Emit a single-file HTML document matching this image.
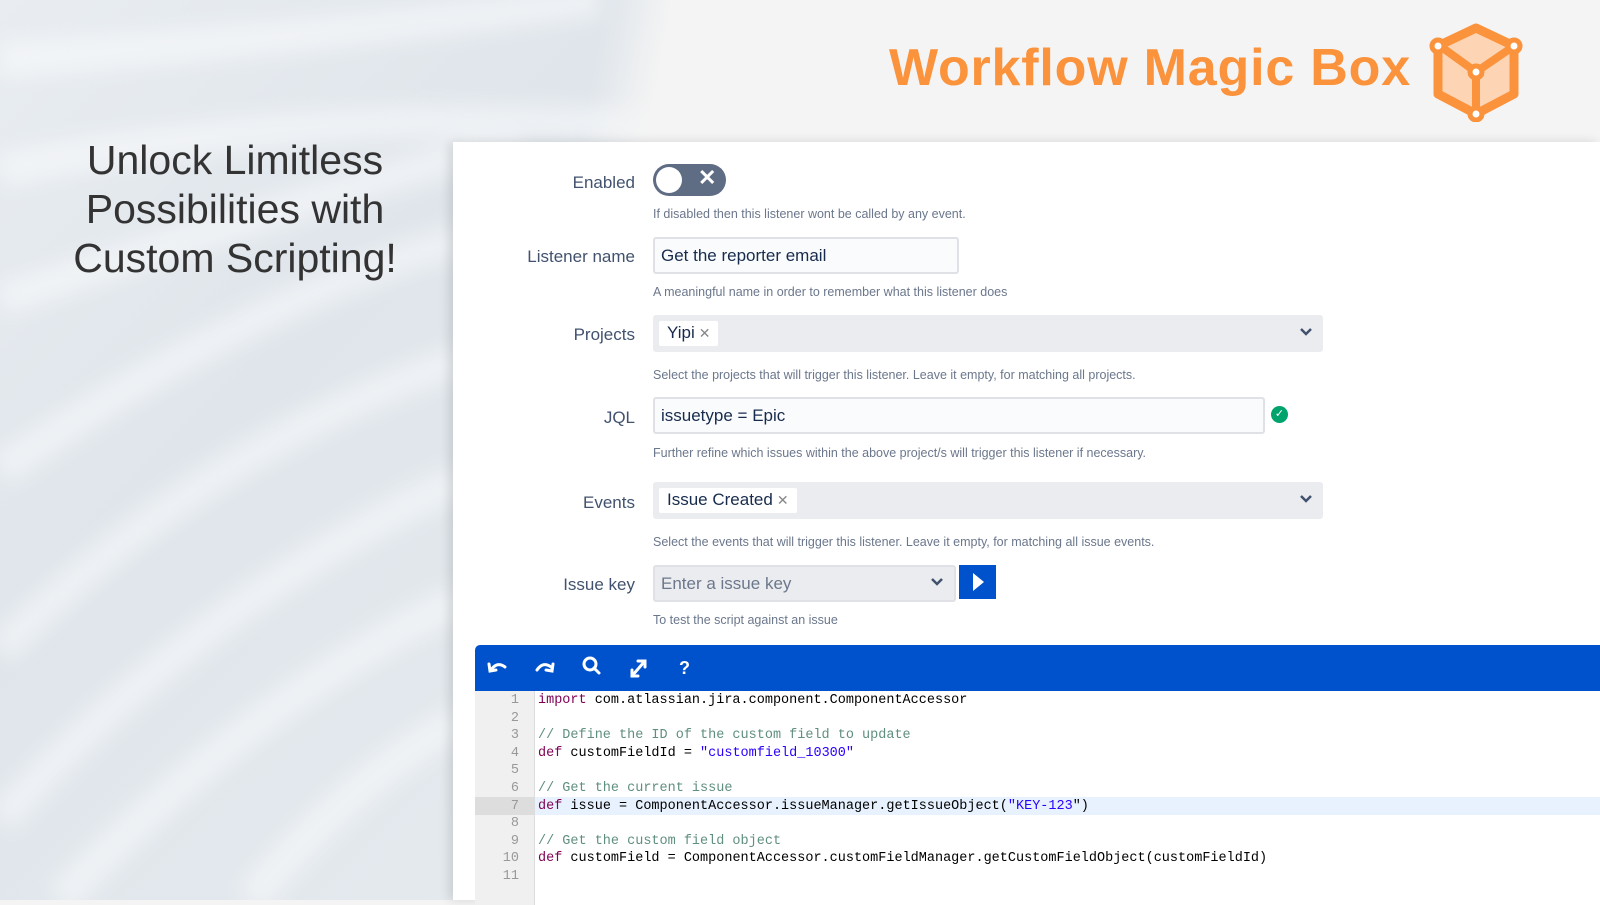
<!DOCTYPE html>
<html><head><style>
*{margin:0;padding:0;box-sizing:border-box}
body{width:1600px;height:900px;overflow:hidden;position:relative;font-family:"Liberation Sans",sans-serif;background:#f4f4f4}
.bgl{position:absolute;left:0;top:0;width:700px;height:900px;background:linear-gradient(135deg,#e9edf1 0%,#dfe5eb 40%,#e6ebef 100%);overflow:hidden}
.title{position:absolute;left:0;width:470px;top:136px;text-align:center;font-size:41px;line-height:49px;color:#333;font-weight:500}
.brand{position:absolute;left:889px;top:38px;font-size:52px;font-weight:bold;color:#fb923c;letter-spacing:0.8px}
.panel{position:absolute;left:453px;top:142px;width:1147px;height:758px;background:#fff;box-shadow:-4px 0 10px rgba(0,0,0,.12)}
.lbl{position:absolute;right:965px;font-size:17px;color:#42526e;text-align:right;white-space:nowrap}
.help{position:absolute;left:200px;font-size:12.5px;color:#6b778c}
.inp{position:absolute;left:200px;height:37px;border:2px solid #dfe1e6;background:#fafbfc;border-radius:3px;font-size:17px;color:#172b4d;padding:7px 6px}
.sel{position:absolute;left:200px;width:670px;height:37px;background:#ebecf0;border-radius:3px}
.tag{position:absolute;left:6px;top:6px;height:25px;background:#fff;border-radius:2px;font-size:17px;color:#172b4d;padding:2px 8px}
.tag span{color:#888;font-size:14px;margin-left:4px}
.chev{position:absolute;right:10px;top:10px}
.ed{position:absolute;left:22px;top:503px;width:1130px;height:260px;background:#fff}
.bar{height:46px;background:#0052cc;border-radius:5px 0 0 0;position:relative}
.code{position:absolute;top:46px;left:0;right:0;bottom:0;font-family:"Liberation Mono",monospace;font-size:13.5px}
.gut{position:absolute;left:0;top:0;width:60px;bottom:0;background:#f0f0f0;border-right:1px solid #ddd}
.ln{position:absolute;height:17.6px;line-height:17.6px;white-space:pre}
.n{width:44px;text-align:right;color:#999}
.k{color:#7f0055}.c{color:#5f8f7f}.s{color:#2a00ff}
</style></head><body>
<div class="bgl">
<svg width="700" height="900" style="position:absolute;left:0;top:0">
<defs><filter id="b"><feGaussianBlur stdDeviation="10"/></filter></defs>
<g fill="none" stroke="#fff" stroke-width="34" opacity=".45" filter="url(#b)">
<path d="M0 60 Q300 40 600 0"/><path d="M0 170 Q350 100 690 130"/><path d="M0 300 Q300 200 520 140"/>
<path d="M0 470 Q250 300 460 240"/><path d="M0 650 Q200 450 460 360"/><path d="M0 820 Q200 600 460 480"/>
<path d="M60 900 Q250 700 460 600"/><path d="M250 900 Q350 780 460 720"/>
</g></svg>
<div style="position:absolute;left:560px;top:0;width:200px;height:150px;background:linear-gradient(100deg,transparent 0 20%,#f4f4f4 50%)"></div>
</div>
<div class="title">Unlock Limitless<br>Possibilities with<br>Custom Scripting!</div>
<div class="brand">Workflow Magic Box</div>
<svg style="position:absolute;left:1428px;top:22px" width="96" height="100" viewBox="0 0 96 100">
<path d="M48 6 L86 24 V72 L48 92 L10 72 V24 Z" fill="#fdd5b5" stroke="#fb923c" stroke-width="9" stroke-linejoin="round"/>
<path d="M12 24 L48 50 L86 24 M48 50 V92" stroke="#fb923c" stroke-width="8" fill="none"/>
<g fill="#fff" stroke="#fb923c" stroke-width="5"><circle cx="48" cy="50" r="6"/><circle cx="10" cy="24" r="6"/><circle cx="86" cy="24" r="6"/><circle cx="48" cy="92" r="6"/></g>
</svg>
<div class="panel">
<div class="lbl" style="top:31px">Enabled</div>
<div style="position:absolute;left:200px;top:22px;width:73px;height:32px;border-radius:16px;background:#5e6c84">
<div style="position:absolute;left:3px;top:3px;width:26px;height:26px;border-radius:50%;background:#fff"></div>
<div style="position:absolute;left:45px;top:1px;color:#fff;font-size:22px;font-weight:bold">✕</div></div>
<div class="help" style="top:65px">If disabled then this listener wont be called by any event.</div>
<div class="lbl" style="top:105px">Listener name</div>
<div class="inp" style="top:95px;width:306px">Get the reporter email</div>
<div class="help" style="top:143px">A meaningful name in order to remember what this listener does</div>
<div class="lbl" style="top:183px">Projects</div>
<div class="sel" style="top:173px"><div class="tag">Yipi<span>✕</span></div><svg class="chev" width="14" height="14"><path d="M2 4 L7 9 L12 4" stroke="#42526e" stroke-width="2.5" fill="none"/></svg></div>
<div class="help" style="top:226px">Select the projects that will trigger this listener. Leave it empty, for matching all projects.</div>
<div class="lbl" style="top:266px">JQL</div>
<div class="inp" style="top:255px;width:612px">issuetype = Epic</div>
<div style="position:absolute;left:818px;top:264px;width:17px;height:17px;border-radius:50%;background:#00a36c;color:#fff;font-size:11px;text-align:center;line-height:17px">✓</div>
<div class="help" style="top:304px">Further refine which issues within the above project/s will trigger this listener if necessary.</div>
<div class="lbl" style="top:351px">Events</div>
<div class="sel" style="top:340px"><div class="tag">Issue Created<span>✕</span></div><svg class="chev" width="14" height="14"><path d="M2 4 L7 9 L12 4" stroke="#42526e" stroke-width="2.5" fill="none"/></svg></div>
<div class="help" style="top:393px">Select the events that will trigger this listener. Leave it empty, for matching all issue events.</div>
<div class="lbl" style="top:433px">Issue key</div>
<div class="sel" style="top:423px;width:303px;border:2px solid #dfe1e6"><div style="position:absolute;left:6px;top:7px;font-size:17px;color:#6b778c">Enter a issue key</div><svg class="chev" style="top:8px" width="14" height="14"><path d="M2 4 L7 9 L12 4" stroke="#42526e" stroke-width="2.5" fill="none"/></svg></div>
<div style="position:absolute;left:506px;top:423px;width:37px;height:34px;background:#0052cc"><svg width="37" height="34"><path d="M14 8 L25 17 L14 26Z" fill="#fff"/></svg></div>
<div class="help" style="top:471px">To test the script against an issue</div>
<div class="ed">
<div class="bar"><svg width="240" height="46" fill="none" stroke="#fff" stroke-width="3" stroke-linecap="round">
<path d="M16 25 Q22 16 30 22"/><path d="M14 19 L15 26 L21 25"/>
<path d="M76 22 Q68 16 62 25"/><path d="M78 19 L77 26 L71 25"/>
<circle cx="115" cy="19" r="6"/><path d="M119 23 L124 28"/>
<path d="M157 31 L169 17 M157 25 V31 H163 M163 16 H170 V22"/>
<text x="204" y="29" fill="#fff" stroke="none" font-size="18" font-weight="bold" font-family="Liberation Sans">?</text>
</svg></div>
<div class="code">
<div class="gut"></div>
<div style="position:absolute;left:0;right:0;top:106px;height:17.6px;background:#e8f2fe"></div>
<div style="position:absolute;left:0;width:60px;top:106px;height:17.6px;background:#ddd"></div>
<div class="ln n" style="top:1px">1
2
3
4
5
6
7
8
9
10
11</div>
<div class="ln" style="left:63px;top:1px;color:#000"><span class="k">import</span> com.atlassian.jira.component.ComponentAccessor

<span class="c">// Define the ID of the custom field to update</span>
<span class="k">def</span> customFieldId = <span class="s">"customfield_10300"</span>

<span class="c">// Get the current issue</span>
<span class="k">def</span> issue = ComponentAccessor.issueManager.getIssueObject(<span class="s">"KEY-123</span>")

<span class="c">// Get the custom field object</span>
<span class="k">def</span> customField = ComponentAccessor.customFieldManager.getCustomFieldObject(customFieldId)
</div>
</div>
</div>
</div>
</body></html>
